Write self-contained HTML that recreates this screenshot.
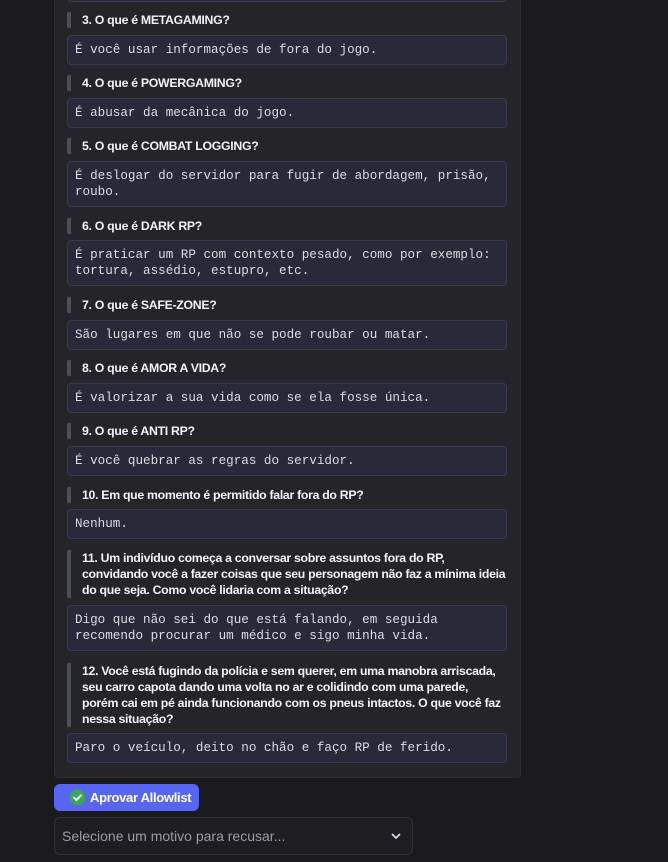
<!DOCTYPE html>
<html><head><meta charset="utf-8"><style>
body{margin:0;width:668px;height:862px;background:#1b1b1f;position:relative;overflow:hidden;font-family:"Liberation Sans",sans-serif}
.embed{position:absolute;left:54px;top:-10px;width:467px;height:788px;background:#242429;border:1px solid #2c2c32;border-radius:4px;box-sizing:border-box}
.h{position:absolute;left:67px;border-left:4px solid #4e5058;border-radius:2px;padding-left:11px;color:#f2f3f5;font-weight:bold;font-size:12.3px;line-height:16px;letter-spacing:-0.3px;width:424px}
.c{position:absolute;left:67px;width:440px;box-sizing:border-box;background:#282939;border:1px solid #3a3b4c;border-radius:4px;padding:6px 7px;font-family:"Liberation Mono",monospace;font-size:12.6px;line-height:16px;color:#dcdde3;white-space:pre}
.btn{position:absolute;left:54px;top:784px;width:145px;height:27px;background:#5865f2;border-radius:6px;color:#fff;font-weight:bold;font-size:13px;letter-spacing:-0.3px;line-height:27px}
.sel{position:absolute;left:54px;top:817px;width:359px;height:38px;box-sizing:border-box;border:1px solid #303036;border-radius:6px;background:#1e1e22;color:#9b9ca3;font-size:14px;line-height:36px;padding-left:7px}
</style></head><body>
<div class="embed"></div>
<div class="c" style="top:-28px;height:30px"> </div>
<div class="h" style="top:12px">3. O que é METAGAMING?</div>
<div class="c" style="top:35px">É você usar informações de fora do jogo.</div>
<div class="h" style="top:75px">4. O que é POWERGAMING?</div>
<div class="c" style="top:98px">É abusar da mecânica do jogo.</div>
<div class="h" style="top:138px">5. O que é COMBAT LOGGING?</div>
<div class="c" style="top:161px">É deslogar do servidor para fugir de abordagem, prisão,
roubo.</div>
<div class="h" style="top:218px">6. O que é DARK RP?</div>
<div class="c" style="top:240px">É praticar um RP com contexto pesado, como por exemplo:
tortura, assédio, estupro, etc.</div>
<div class="h" style="top:297px">7. O que é SAFE-ZONE?</div>
<div class="c" style="top:320px">São lugares em que não se pode roubar ou matar.</div>
<div class="h" style="top:360px">8. O que é AMOR A VIDA?</div>
<div class="c" style="top:383px">É valorizar a sua vida como se ela fosse única.</div>
<div class="h" style="top:423px">9. O que é ANTI RP?</div>
<div class="c" style="top:446px">É você quebrar as regras do servidor.</div>
<div class="h" style="top:487px">10. Em que momento é permitido falar fora do RP?</div>
<div class="c" style="top:509px">Nenhum.</div>
<div class="h" style="top:550px">11. Um indivíduo começa a conversar sobre assuntos fora do RP,<br>convidando você a fazer coisas que seu personagem não faz a mínima ideia<br>do que seja. Como você lidaria com a situação?</div>
<div class="c" style="top:605px">Digo que não sei do que está falando, em seguida
recomendo procurar um médico e sigo minha vida.</div>
<div class="h" style="top:663px">12. Você está fugindo da polícia e sem querer, em uma manobra arriscada,<br>seu carro capota dando uma volta no ar e colidindo com uma parede,<br>porém cai em pé ainda funcionando com os pneus intactos. O que você faz<br>nessa situação?</div>
<div class="c" style="top:733px">Paro o veículo, deito no chão e faço RP de ferido.</div>
<div class="btn"><svg style="position:absolute;left:15px;top:5px" width="17" height="17" viewBox="0 0 17 17"><circle cx="8.5" cy="8.5" r="8" fill="#3ba55c"/><path d="M5 8.7l2.4 2.4 4.6-4.8" stroke="#fff" stroke-width="2" fill="none" stroke-linecap="round" stroke-linejoin="round"/></svg><span style="position:absolute;left:36px">Aprovar Allowlist</span></div>
<div class="sel">Selecione um motivo para recusar...<svg style="position:absolute;right:10px;top:14px" width="12" height="8" viewBox="0 0 12 8"><path d="M2 2l4 4 4-4" stroke="#dcdde3" stroke-width="1.8" fill="none"/></svg></div>
</body></html>
